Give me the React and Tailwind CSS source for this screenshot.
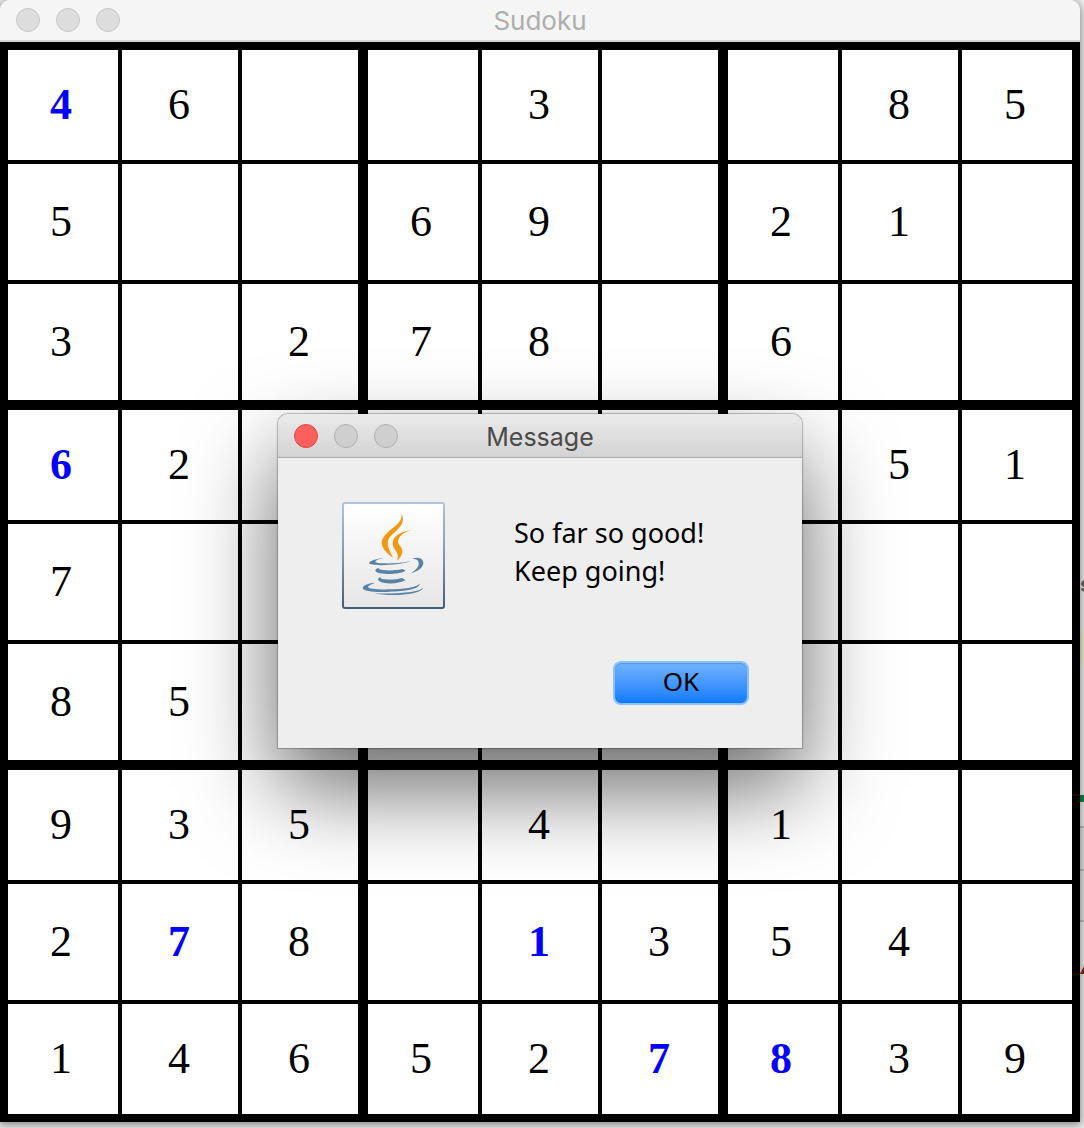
import React from "react";

const board = [
  ["4*", "6", "", "", "3", "", "", "8", "5"],
  ["5", "", "", "6", "9", "", "2", "1", ""],
  ["3", "", "2", "7", "8", "", "6", "", ""],
  ["6*", "2", "", "", "", "", "", "5", "1"],
  ["7", "", "", "", "", "", "", "", ""],
  ["8", "5", "", "", "", "", "", "", ""],
  ["9", "3", "5", "", "4", "", "1", "", ""],
  ["2", "7*", "8", "", "1*", "3", "5", "4", ""],
  ["1", "4", "6", "5", "2", "7*", "8*", "3", "9"],
];

function rowClass(r) {
  if (r === 0) return "h-[110px]";
  if (r === 8) return "h-[114px]";
  return "h-[120px]";
}

function cellClass(r, c) {
  const left = c === 0 ? "border-l-0 pr-1" : c % 3 === 0 ? "border-l-10 pr-1" : c === 8 ? "border-l-4 pr-1" : "border-l-4 pr-0.5";
  const top = r === 0 ? "border-t-0" : r % 3 === 0 ? "border-t-10" : "border-t-4";
  return `${left} ${top}`;
}

function Cell({ value, r, c }) {
  const placed = value.endsWith("*");
  return (
    <td
      className={`border-black py-0 pl-0 text-center align-middle text-[44px] leading-[48px] ${cellClass(r, c)} ${
        placed ? "font-bold text-[#0000ff]" : "text-black"
      }`}
    >
      {value.replace("*", "")}
    </td>
  );
}

function Lights({ active, label }) {
  const idle = active ? "border-[#b0b0b0] bg-[#cfcfcf]" : "border-[#c9c9c9] bg-[#dddddd]";
  return (
    <div className="flex gap-4">
      <button
        aria-label={`Close ${label}`}
        className={`size-6 rounded-full border ${active ? "border-[#e2463f] bg-[#fc605c]" : idle}`}
      />
      <button aria-label={`Minimize ${label}`} className={`size-6 rounded-full border ${idle}`} />
      <button aria-label={`Zoom ${label}`} className={`size-6 rounded-full border ${idle}`} />
    </div>
  );
}

function JavaIcon() {
  return (
    <svg width="103" height="107" viewBox="37 37 309 321" role="img" aria-label="Java" className="shrink-0">
      <defs>
        <linearGradient id="tile" x1="0" y1="0" x2="0" y2="1">
          <stop offset="0" stopColor="#ffffff" />
          <stop offset="1" stopColor="#e6e6e6" />
        </linearGradient>
        <linearGradient id="edge" x1="0" y1="0" x2="0" y2="1">
          <stop offset="0" stopColor="#b0c3d8" />
          <stop offset="0.5" stopColor="#7f98af" />
          <stop offset="1" stopColor="#435d77" />
        </linearGradient>
      </defs>
      <rect x="40" y="40" width="303" height="315" rx="6" fill="url(#tile)" stroke="url(#edge)" strokeWidth="6" />
      <g fill="#f09a14">
        <path d="M215 71C224 88 221 103 203 120C186 136 174 145 174 160C174 175 183 189 190 204C170 191 155 174 156 157C158 137 181 122 198 108C212 96 218 85 215 71Z" />
        <path d="M245 121C224 126 206 140 205 155C204 166 218 172 218 184C218 197 209 207 203 213C205 202 206 195 199 184C192 174 187 166 190 154C194 136 218 125 245 121Z" />
      </g>
      <g fill="#5a83a3">
        <path d="M162 205C144 207 120 213 118 220C119 231 216 227 243 214C226 219 190 222 164 221C145 221 134 218 138 214C142 210 152 208 162 205Z" />
        <path d="M247 207C267 200 281 207 281 220C281 235 263 246 244 250C261 239 268 231 267 220C266 209 257 207 247 207Z" />
        <path d="M150 234C141 235 134 240 139 246C149 255 208 256 228 243L218 238C196 244 161 243 149 239C146 237 147 236 150 234Z" />
        <path d="M155 261C147 263 142 268 148 274C161 284 207 284 228 271L216 265C196 271 167 270 155 267C151 265 152 263 155 261Z" />
        <path d="M136 279C119 280 98 287 99 295C102 307 144 308 181 306C224 304 270 299 270 282C258 294 220 298 181 299C145 300 113 297 115 291C116 286 129 284 136 279Z" />
        <path d="M281 294C274 308 240 314 203 316C175 317 150 315 134 311C168 313 207 311 235 308C259 305 272 301 281 294Z" />
      </g>
    </svg>
  );
}

function SudokuWindow() {
  return (
    <main className="relative mr-1 rounded-t-[10px] shadow-[0_2px_8px_1px_rgba(0,0,0,0.45)]">
      <header className="grid h-[42px] grid-cols-[1fr_auto_1fr] items-center rounded-t-[10px] border-b-2 border-[#d5d5d5] bg-[#f5f5f5] px-4">
        <Lights label="Sudoku" />
        <h1 className="pt-0.5 text-[26px] leading-8 text-[#aeaeae]">Sudoku</h1>
      </header>
      <table className="w-full table-fixed border-separate border-spacing-0 border-8 border-black bg-white font-['Liberation_Serif','Times_New_Roman',serif]">
        <colgroup>
          {board.map((_, c) => (
            <col key={c} className={c === 0 ? "w-[110px]" : c === 8 ? "w-[114px]" : ""} />
          ))}
        </colgroup>
        <tbody>
          {board.map((row, r) => (
            <tr key={r} className={rowClass(r)}>
              {row.map((value, c) => (
                <Cell key={c} value={value} r={r} c={c} />
              ))}
            </tr>
          ))}
        </tbody>
      </table>
      <MessageDialog />
    </main>
  );
}

function MessageDialog() {
  return (
    <section
      role="dialog"
      aria-labelledby="message-title"
      className="absolute top-[414px] left-1/2 w-[524px] -translate-x-1/2 rounded-t-[10px] bg-[#eeeeee] shadow-[0_0_1px_1px_rgba(0,0,0,0.25),0_40px_90px_rgba(0,0,0,0.6)]"
    >
      <header className="grid h-11 grid-cols-[1fr_auto_1fr] items-center rounded-t-[10px] border-b border-[#adadad] bg-linear-to-b from-[#ebebeb] to-[#d3d3d3] px-4 pt-px">
        <Lights active label="Message" />
        <h2 id="message-title" className="pt-0.5 text-[25px] leading-8 text-[#4a4a4a]">
          Message
        </h2>
      </header>
      <div className="px-[53px] pb-[43px] font-['Noto_Sans','Open_Sans',sans-serif] text-[27px] text-black">
        <div className="flex gap-[69px] pt-11 pl-[11px]">
          <JavaIcon />
          <p className="pt-3 leading-[38px]">
            So far so good!
            <br />
            Keep going!
          </p>
        </div>
        <div className="flex justify-end pt-[52px]">
          <button className="h-11 w-[136px] rounded-lg border-2 border-[#8dc0fb] bg-linear-to-b from-[#6fb2fb] to-[#087bff] pb-1 text-[26px] leading-9 shadow-[inset_0_1px_1px_#4c96e6]">
            OK
          </button>
        </div>
      </div>
    </section>
  );
}

function BackgroundSliver() {
  return (
    <div aria-hidden="true" className="absolute inset-y-0 right-0 flex w-1 flex-col overflow-hidden">
      <span className="mt-[572px] h-[60px] text-[22px] leading-6 font-bold text-[#666666]">s</span>
      <span className="h-8 shrink-0 bg-[#f4edd2]" />
      <span className="mt-[131px] h-[7px] shrink-0 bg-[#0c8040]" />
      <span className="mt-6 h-[45px] shrink-0 border-y-2 border-[#bdbdbd] bg-[#e4e4e4]" />
      <span className="h-[51px] shrink-0 border-b-2 border-[#bdbdbd] bg-[#e4e4e4]" />
      <svg className="mt-11 shrink-0" width="4" height="10" viewBox="0 0 4 10">
        <path d="M4 0V8H0Z" fill="#8c1a10" />
      </svg>
    </div>
  );
}

export default function App() {
  return (
    <div className="relative min-h-screen overflow-hidden bg-[#eeeeee] font-[Inter,Roboto,sans-serif]">
      <BackgroundSliver />
      <SudokuWindow />
    </div>
  );
}
